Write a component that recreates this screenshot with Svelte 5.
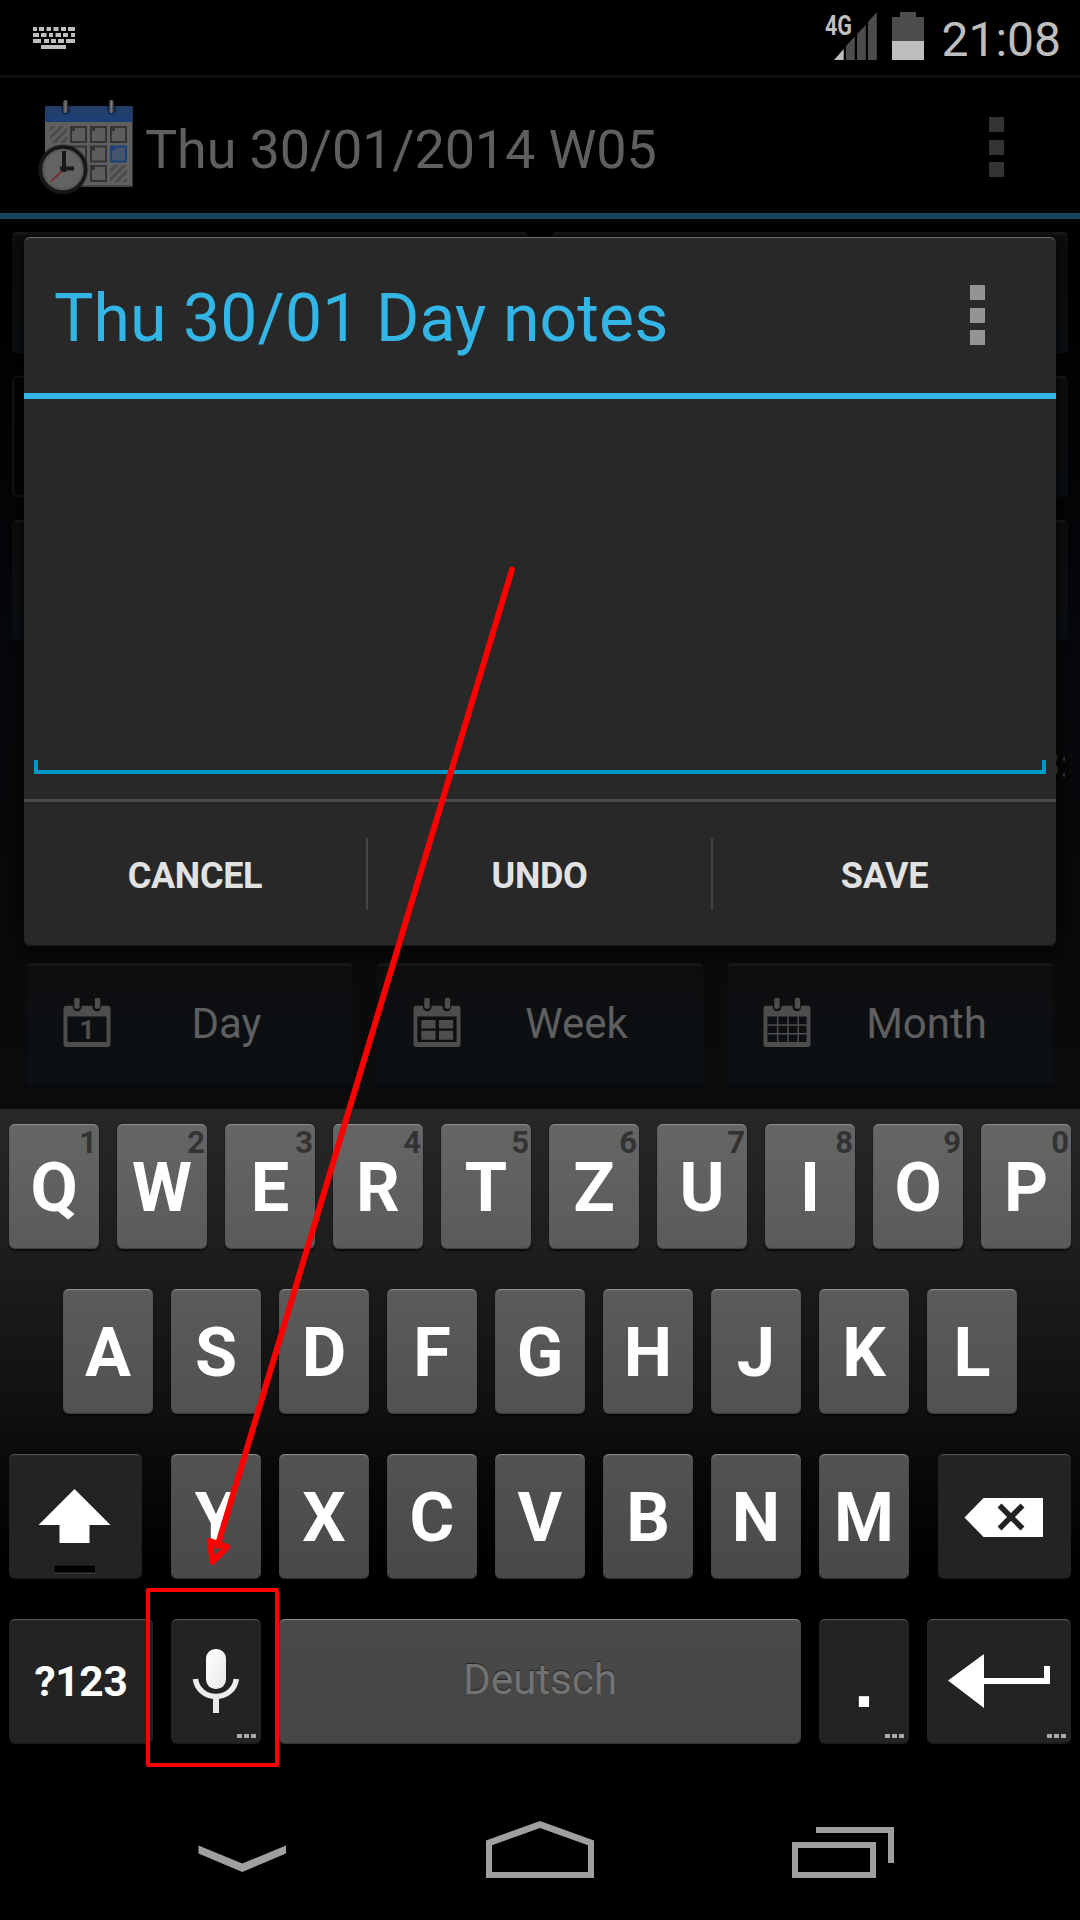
<script>
  const rowOne = [...'QWERTZUIOP'].map((label, i) => ({ label, hint: String((i + 1) % 10) }));
  const rowTwo = [...'ASDFGHJKL'];
  const rowThree = [...'YXCVBNM'];
  const views = [
    { name: 'Day', kind: 'day' },
    { name: 'Week', kind: 'week' },
    { name: 'Month', kind: 'month' }
  ];
  // [x, width] of every key in the status bar keyboard glyph, line by line
  const glyphRows = [
    [[0, 4], [6, 5], [13.5, 4.5], [20.5, 5], [28, 5], [35, 7]],
    [[0, 6], [8, 5.5], [16, 4], [22.5, 5.5], [30, 5], [38, 4]],
    [[0, 8], [11, 5], [18, 5], [25, 6], [33, 9]],
    [[8, 25]]
  ];
  const cells = [[1, 0], [2, 0], [3, 0], [1, 1], [2, 1], [2, 2]];
</script>

<div class="screen">
  <header class="status">
    <svg class="kbd" viewBox="0 0 42 22">
      {#each glyphRows as row, r}
        {#each row as [x, w]}
          <rect {x} y={r * 6} width={w} height="4" />
        {/each}
      {/each}
    </svg>
    <div class="status-right">
      <svg class="signal" viewBox="0 0 52 48">
        <path class="dim" d="M21 34L29.8 24.5V48H21zM32 22L40.8 13V48H32zM43 10L51.8 0V48H43z" />
        <path class="lit" d="M9 48L18.7 37V48z" />
        <text x="0" y="22.5" textLength="27" lengthAdjust="spacingAndGlyphs">4G</text>
      </svg>
      <svg class="battery" viewBox="0 0 32 48">
        <path class="dim" d="M8 0H24V5H32V29H0V5H8z" />
        <path class="lit" d="M0 29H32V48H0z" />
      </svg>
      <span class="clock">21:08</span>
    </div>
  </header>

  <div class="actionbar">
    <svg class="appicon" viewBox="0 0 100 100">
      <defs>
        <linearGradient id="band" x1="0" y1="0" x2="0" y2="1">
          <stop offset="0" stop-color="#263d63" />
          <stop offset="1" stop-color="#1b4079" />
        </linearGradient>
        <linearGradient id="ring" x1="0" y1="0" x2="1" y2="0">
          <stop offset="0" stop-color="#333" />
          <stop offset=".5" stop-color="#777" />
          <stop offset="1" stop-color="#222" />
        </linearGradient>
        <pattern id="hatch" width="6" height="6" patternUnits="userSpaceOnUse" patternTransform="rotate(45)">
          <rect width="3" height="6" fill="#4b4b4b" />
        </pattern>
        <radialGradient id="halo">
          <stop offset=".86" stop-color="#151515" />
          <stop offset="1" stop-color="#151515" stop-opacity="0" />
        </radialGradient>
      </defs>
      <rect x="10" y="6" width="87.5" height="81" fill="#5f5f5f" />
      <rect x="10" y="85.3" width="87.5" height="1.7" fill="#414141" />
      <rect x="10" y="6" width="87.5" height="16" fill="url(#band)" />
      <path d="M26 6v4a4.6 4.6 0 0 0 9.200 0V6zM72 6v4a4.600 4.600 0 0 0 9.200 0V6z" fill="#102a54" />
      <rect x="28" y="0" width="5" height="13" rx="2.500" fill="url(#ring)" />
      <rect x="74" y="0" width="5" height="13" rx="2.500" fill="url(#ring)" />
      <rect x="15" y="26" width="17" height="17" fill="url(#hatch)" />
      <rect x="75" y="65" width="17" height="17" fill="url(#hatch)" />
      {#each cells as [c, r]}
        <rect x={36 + (c - 1) * 20} y={27 + r * 19.500} width="15" height="15" fill="#5d5d5d" stroke="#343434" stroke-width="2" />
        <rect x={36 + (c - 1) * 20} y={27 + r * 19.500} width="4" height="4" fill="#343434" />
      {/each}
      <rect x="76" y="46.500" width="15" height="15" fill="#45536c" stroke="#1b4079" stroke-width="2" />
      <rect x="76" y="46.500" width="4" height="4" fill="#1b4079" />
      <circle cx="28" cy="69.500" r="26" fill="url(#halo)" />
      <circle cx="28" cy="69.500" r="22.500" fill="#595955" stroke="#171717" stroke-width="3.500" />
      <circle cx="28" cy="69.500" r="18.500" fill="#636363" />
      <path d="M28.500 69.500L16 81.500" stroke="#7a2020" stroke-width="1.500" />
      <path d="M29 51V72M25 68.500H39" stroke="#181818" stroke-width="4" fill="none" />
    </svg>
    <h1>Thu 30/01/2014 W05</h1>
    <div class="dots dark"><i></i><i></i><i></i></div>
  </div>

  <main>
    <div class="grid">
      <div class="tile"></div><div class="tile"></div>
      <div class="tile outlined"></div><div class="tile"></div>
      <div class="tile"></div><div class="tile"></div>
    </div>
    <div class="info"><span>3:</span></div>
    <div class="views">
      {#each views as v}
        <div class="tile view">
          <svg viewBox="0 0 48 50">
            <path fill-rule="evenodd" d="M3 8H9.500V9Q10 13.500 14 13.500Q18 13.500 18.500 9V8H29.500V9Q30 13.500 34 13.500Q38 13.500 38.500 9V8H45Q48 8 48 11V47Q48 50 45 50H3Q0 50 0 47V11Q0 8 3 8zM4 19V45H44V19z" />
            <rect x="11" y="0" width="5.500" height="11" rx="1.500" />
            <rect x="32" y="0" width="5.500" height="11" rx="1.500" />
            {#if v.kind === 'day'}
              <text x="24" y="42" text-anchor="middle">1</text>
            {:else if v.kind === 'week'}
              <path d="M8 22.500H22.500V31H8zM26 22.500H40.500V31H26zM8 33.500H22.500V42.500H8zM26 33.500H40.500V42.500H26z" />
            {:else}
              <path class="mesh" d="M14.500 19V45M25 19V45M35.500 19V45M4 27.500H44M4 36.500H44" />
            {/if}
          </svg>
          <span>{v.name}</span>
        </div>
      {/each}
    </div>
  </main>

  <section class="keyboard">
    <div class="row r1">
      {#each rowOne as k}
        <div class="key">{k.label}<small>{k.hint}</small></div>
      {/each}
    </div>
    <div class="row r2">
      {#each rowTwo as k}<div class="key">{k}</div>{/each}
    </div>
    <div class="row r3">
      <div class="key fn shift">
        <svg width="133" height="125" viewBox="0 0 133 125">
          <path d="M65.500 35L101.500 71H80.500V89H50.500V71H29.500z" fill="#fff" />
          <rect x="45.500" y="111.500" width="40.500" height="8.500" fill="#3a3a3a" />
          <rect x="45.500" y="111.500" width="40.500" height="7" fill="#000" />
        </svg>
      </div>
      <div class="letters">
        {#each rowThree as k}<div class="key">{k}</div>{/each}
      </div>
      <div class="key fn shift">
        <svg width="133" height="125" viewBox="0 0 133 125">
          <path d="M26.500 63.500L45.500 44H105V83H45.500z" fill="#fff" />
          <path d="M61.500 51.500L84.500 74.500M84.500 51.500L61.500 74.500" stroke="#232323" stroke-width="5.500" />
        </svg>
      </div>
    </div>
    <div class="row r4">
      <div class="key fn wide sym">?123</div>
      <div class="key fn">
        <svg width="90" height="125" viewBox="0 0 90 125">
          <defs>
            <linearGradient id="mic" x1="0" y1="0" x2="1" y2="1">
              <stop offset="0" stop-color="#fff" />
              <stop offset="1" stop-color="#e8e8e8" />
            </linearGradient>
          </defs>
          <rect x="35" y="30" width="20" height="40" rx="9.500" fill="url(#mic)" />
          <path d="M24.500 60A20.500 19.500 0 0 0 65.300 60" fill="none" stroke="#ececec" stroke-width="5.500" />
          <path d="M45 80V94" stroke="#e8e8e8" stroke-width="6" />
        </svg>
        <div class="more"><i></i><i></i><i></i></div>
      </div>
      <div class="key space">Deutsch</div>
      <div class="key fn period">.<div class="more"><i></i><i></i><i></i></div></div>
      <div class="key fn wide">
        <svg width="144" height="125" viewBox="0 0 144 125">
          <path d="M21 61.500L57 35V59H117V47H123V65H57V89z" fill="#fff" />
        </svg>
        <div class="more"><i></i><i></i><i></i></div>
      </div>
    </div>
  </section>

  <nav>
    <svg viewBox="0 0 1080 144">
      <path d="M198.500 69.500L242.300 87.500L286 69.500V77.500L242.300 96L198.500 77.500z" />
      <path fill-rule="evenodd" d="M540 45L594 64.500V102H486V64.500zM540 52L492 69.300V96H588V69.300z" />
      <path fill-rule="evenodd" d="M792 66H876V102H792zM798 72V96H870V72z" />
      <path d="M816 51H894V87H888V57H816z" />
    </svg>
  </nav>

  <div class="dialog">
    <div class="dialog-head">
      <h2>Thu 30/01 Day notes</h2>
      <div class="dots"><i></i><i></i><i></i></div>
    </div>
    <div class="editor"><div class="field"></div></div>
    <div class="actions">
      <span>CANCEL</span><span>UNDO</span><span>SAVE</span>
    </div>
  </div>

  <svg class="marks" viewBox="0 0 1080 1920">
    <path d="M512 569.500L217.500 1546" stroke-width="6" />
    <path d="M210 1541L212.500 1562L227 1547z" stroke-width="6" />
    <rect x="148" y="1590" width="129" height="175" stroke-width="4" />
  </svg>
</div>

<style>
  :global(body) {
    margin: 0;
    background: #000;
  }
  .screen {
    position: relative;
    width: 1080px;
    height: 1920px;
    overflow: hidden;
    display: flex;
    flex-direction: column;
    background: #000;
    font-family: Roboto, sans-serif;
  }
  .screen :global(*) {
    box-sizing: border-box;
  }
  svg {
    display: block;
    flex: none;
  }
  h1,
  h2 {
    margin: 0;
    font-weight: 400;
    white-space: nowrap;
  }
  .status {
    height: 78px;
    flex: none;
    border-bottom: 3px solid #0f0f0f;
    display: flex;
    justify-content: space-between;
    align-items: center;
    padding: 0 19px 0 33px;
  }
  .kbd {
    width: 42px;
    height: 22px;
    fill: #bebebe;
  }
  .status-right {
    display: flex;
    align-items: flex-start;
    height: 75px;
    padding-top: 12px;
  }
  .signal {
    width: 52px;
    height: 48px;
    margin-right: 15px;
    overflow: visible;
  }
  .signal text {
    font-size: 28px;
    font-weight: 700;
    fill: #bebebe;
  }
  .battery {
    width: 32px;
    height: 48px;
    margin-right: 17px;
  }
  .dim {
    fill: #4c4c4c;
  }
  .lit {
    fill: #bebebe;
  }
  .clock {
    font-size: 48px;
    line-height: 56px;
    color: #bebebe;
  }
  .actionbar {
    height: 141px;
    flex: none;
    border-bottom: 6px solid #14465a;
    display: flex;
    align-items: center;
    padding-left: 35px;
    padding-right: 76px;
  }
  .appicon {
    width: 100px;
    height: 100px;
    margin-top: 9px;
  }
  h1 {
    margin-left: 10px;
    padding-top: 9px;
    font-size: 54px;
    line-height: 64px;
    letter-spacing: -0.16px;
    color: #5f5f5f;
    flex: 1;
  }
  .dots {
    display: flex;
    flex-direction: column;
    gap: 7.5px;
    padding-bottom: 4px;
  }
  .dots i {
    width: 15px;
    height: 15px;
    background: #949494;
  }
  .dots.dark i {
    background: #333;
  }
  .dots.dark {
    padding-top: 3px;
    padding-bottom: 0;
  }
  main {
    height: 890px;
    flex: none;
    background: linear-gradient(#000, #05070a 45%, #0a0a0c 80%, #0a0b0d);
    padding: 13px 12px 0;
  }
  .grid {
    display: grid;
    grid-template-columns: 516px 516px;
    grid-auto-rows: 121px;
    gap: 23px 24px;
  }
  .tile {
    background: linear-gradient(#0d0e10, #0c1013);
    border-top: 3px solid #17191a;
    border-radius: 5px;
  }
  .tile.outlined {
    background: #060606;
    border: 2px solid #151515;
  }
  .info {
    height: 100px;
    margin-top: 88px;
    width: 1053px;
    overflow: hidden;
    display: flex;
    justify-content: flex-end;
    color: #3d3d3d;
    font-size: 36px;
    line-height: 72px;
  }
  .info span {
    margin-right: -4px;
  }
  .views {
    display: flex;
    gap: 24px;
    padding: 0 15px;
    margin-top: 134px;
  }
  .view {
    width: 326px;
    height: 121px;
    display: flex;
    align-items: center;
    padding-left: 36px;
    border-color: #191a1c;
    flex: none;
  }
  .view svg {
    width: 48px;
    height: 49px;
    fill: #4d4d4d;
    margin-top: -5px;
  }
  .view text {
    font-size: 27px;
    font-weight: 700;
  }
  .mesh {
    stroke: #4d4d4d;
    stroke-width: 1.5;
  }
  .view span {
    flex: 1;
    text-align: center;
    padding-right: 11px;
    font-size: 42px;
    line-height: 50px;
    margin-top: -2px;
    color: #5f5f5f;
  }
  .keyboard {
    height: 667px;
    flex: none;
    padding: 15px 9px 0;
    display: flex;
    flex-direction: column;
    gap: 40px;
    background: linear-gradient(#282828 0, #1d1d1d 150px, #101010 300px, #060606 390px, #000 460px);
  }
  .row {
    height: 125px;
    display: flex;
    justify-content: space-between;
  }
  .r2 {
    padding: 0 54px;
  }
  .letters {
    display: flex;
    gap: 18px;
  }
  .key {
    position: relative;
    width: 90px;
    height: 125px;
    flex: none;
    display: flex;
    align-items: center;
    justify-content: center;
    padding-top: 3px;
    border-radius: 6px;
    color: #fff;
    font-size: 68.5px;
    font-weight: 700;
    line-height: 1;
    box-shadow: inset 0 2px 1px -1px #909090, inset 0 -1px 1px rgba(0, 0, 0, 0.3), 0 2px 2px rgba(0, 0, 0, 0.6);
    background: linear-gradient(#656565, #5b5b5b);
  }
  .r2 .key {
    background: linear-gradient(#5b5b5b, #515151);
  }
  .r3 .key {
    background: linear-gradient(#525252, #494949);
  }
  .r4 .key {
    background: linear-gradient(#494949, #464646);
  }
  .row .key.fn {
    padding-top: 0;
    background: #232323;
    box-shadow: inset 0 2px 1px -1px #5c5c5c, inset 0 -1px 1px rgba(0, 0, 0, 0.3);
  }
  .key.shift {
    width: 133px;
  }
  .row .wide {
    width: 144px;
  }
  .row .space {
    width: 522px;
    font-size: 42.5px;
    letter-spacing: -0.2px;
    font-weight: 400;
    color: #727272;
    text-shadow: 0 -1px 1px #222;
    padding-top: 0;
    padding-bottom: 2px;
  }
  .row .key.sym {
    font-size: 42.5px;
    letter-spacing: -0.3px;
    padding-top: 2px;
  }
  .period {
    font-family: 'Liberation Sans', Arial, sans-serif;
    font-size: 72px;
  }
  small {
    position: absolute;
    top: 3px;
    right: 2px;
    font-size: 31px;
    line-height: 31px;
    color: #333;
  }
  .more {
    position: absolute;
    right: 5px;
    bottom: 6px;
    display: flex;
    gap: 2px;
  }
  .more i {
    width: 5px;
    height: 4px;
    background: #aaa;
  }
  nav {
    height: 144px;
    flex: none;
    background: #000;
  }
  nav svg {
    width: 1080px;
    height: 144px;
    fill: #9f9f9f;
  }
  .dialog {
    position: absolute;
    left: 24px;
    top: 237px;
    width: 1032px;
    height: 709px;
    border-radius: 6px;
    background: #282828;
    box-shadow: inset 0 2px 1px -1px #707070, inset 0 -1px 1px #1a1a1a, 0 6px 18px 4px rgba(0, 0, 0, 0.7);
    display: flex;
    flex-direction: column;
  }
  .dialog-head {
    height: 162px;
    border-bottom: 6px solid #33b5e5;
    display: flex;
    align-items: center;
    justify-content: space-between;
    padding: 4px 71px 0 30px;
  }
  h2 {
    font-size: 66px;
    line-height: 78px;
    letter-spacing: 0.15px;
    color: #33b5e5;
    padding-top: 3px;
  }
  .editor {
    height: 403px;
    border-bottom: 3px solid #4a4a4a;
    padding: 0 10px 25px;
    display: flex;
    align-items: flex-end;
  }
  .field {
    width: 100%;
    height: 14px;
    border: 4px solid #0099cc;
    border-top: 0;
  }
  .actions {
    display: grid;
    grid-template-columns: 342px 345px 345px;
    align-items: center;
    flex: 1;
  }
  .actions span {
    height: 72px;
    line-height: 76px;
    text-align: center;
    font-size: 36px;
    letter-spacing: -0.35px;
    font-weight: 700;
    color: #e2e2e2;
    border-left: 2px solid #464646;
  }
  .actions span:first-child {
    border-left: 0;
  }
  .marks {
    position: absolute;
    left: 0;
    top: 0;
    width: 1080px;
    height: 1920px;
    fill: none;
    stroke: #f00;
    stroke-linecap: round;
    stroke-linejoin: round;
  }
</style>
